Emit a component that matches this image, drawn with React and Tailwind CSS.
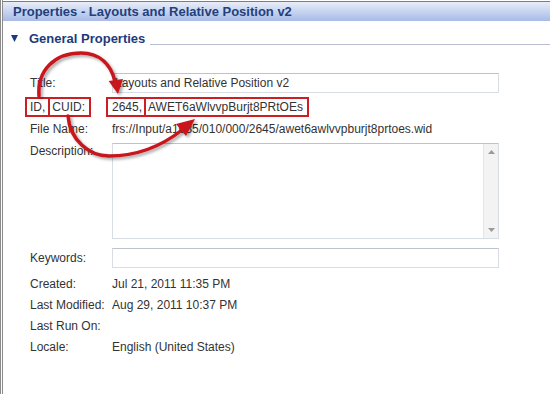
import React from "react";

const Label = ({ children, className = "" }) => (
  <div className={"w-[82px] shrink-0 text-[12px] text-[#333] " + className}>{children}</div>
);

const Input = ({ children }) => (
  <div className="w-[387px] h-[20px] border border-[#d8dce4] border-t-[#bfc3cb] flex items-center pl-[2px] text-[12px] text-[#333] bg-white">
    {children}
  </div>
);

function Arrows() {
  return (
    <svg className="absolute left-0 top-0 pointer-events-none" width="550" height="394" viewBox="0 0 550 394">
      <defs>
        <filter id="sh" x="-20%" y="-20%" width="140%" height="140%">
          <feDropShadow dx="2" dy="2" stdDeviation="1.5" floodColor="#000" floodOpacity="0.35" />
        </filter>
      </defs>
      <g filter="url(#sh)" fill="none" stroke="#c8161d" strokeWidth="3.5" strokeLinecap="round">
        <path d="M 36 96 C 34 70, 52 53, 78 53 C 98 53, 108 66, 112 81" />
        <path d="M 65 116 C 67 140, 86 156, 106 156 C 135 156, 160 145, 179 130" />
      </g>
      <g filter="url(#sh)" fill="#c8161d">
        <polygon points="105.6,81 120,79 115,94" />
        <polygon points="173,124 183,136 192,119" />
      </g>
    </svg>
  );
}

export default function App() {
  return (
    <div className="relative w-[550px] h-[394px] bg-white overflow-hidden font-['Liberation_Sans',Arial,sans-serif] border-l-[3px] border-double border-[#8a8a8a]">
      <div className="mt-[1px] h-[20px] border-t border-[#6d7ea6] bg-gradient-to-b from-[#e8edf8] to-[#a7bbe6] flex items-center pl-[10px]">
        <span className="text-[13px] font-bold text-[#22407c] leading-none">Properties - Layouts and Relative Position v2</span>
      </div>

      <div className="mt-[10px] h-[14px] flex items-center">
        <svg className="ml-[8px]" width="7" height="7" viewBox="0 0 7 7"><polygon points="0,0 7,0 3.5,7" fill="#1d3b7a" /></svg>
        <span className="ml-[11px] text-[13px] font-bold text-[#1d3b7a] leading-none">General Properties</span>
        <div className="ml-[5px] flex-1 h-[1px] bg-[#b7bed2] mt-[12px]"></div>
      </div>

      <div className="ml-[27px] mt-[28px] flex flex-col">
        <div className="h-[20px] flex items-center">
          <Label>Title:</Label>
          <Input>Layouts and Relative Position v2</Input>
        </div>

        <div className="mt-[4px] h-[20px] flex items-center">
          <Label>
            <div className="flex -ml-[5px]">
              <span className="border-2 border-[#cc1f24] h-[20px] flex items-center px-[3px]">ID,</span>
              <span className="-ml-[2px] border-2 border-[#cc1f24] h-[20px] flex items-center pl-[2px] pr-[4px]">CUID:</span>
            </div>
          </Label>
          <div className="flex -ml-[6px] text-[12px] text-[#333]">
            <span className="border-2 border-[#cc1f24] h-[20px] flex items-center pl-[4px] pr-[2px]">2645,</span>
            <span className="-ml-[2px] border-2 border-[#cc1f24] h-[20px] flex items-center pl-[2px] pr-[4px]">AWET6aWlvvpBurjt8PRtOEs</span>
          </div>
        </div>

        <div className="mt-[2px] h-[20px] flex items-center">
          <Label>File Name:</Label>
          <span className="text-[12px] text-[#333]">frs://Input/a1085/010/000/2645/awet6awlvvpburjt8prtoes.wid</span>
        </div>

        <div className="mt-[4px] flex items-start">
          <Label className="mt-[1px] leading-[14px]">Description:</Label>
          <div className="w-[387px] h-[96px] border border-[#d8dce4] border-t-[#bfc3cb] flex justify-end bg-white">
            <div className="w-[15px] h-full bg-[#f3f3f3] border-l border-[#e6e6e6] flex flex-col items-center justify-between py-[6px]">
              <svg width="7" height="4" viewBox="0 0 7 4"><polygon points="0,4 3.5,0 7,4" fill="#9a9a9a" /></svg>
              <svg width="7" height="4" viewBox="0 0 7 4"><polygon points="0,0 7,0 3.5,4" fill="#9a9a9a" /></svg>
            </div>
          </div>
        </div>

        <div className="mt-[9px] h-[20px] flex items-center">
          <Label>Keywords:</Label>
          <Input></Input>
        </div>

        <div className="mt-[5px] h-[21px] flex items-center">
          <Label>Created:</Label>
          <span className="text-[12px] text-[#333]">Jul 21, 2011 11:35 PM</span>
        </div>
        <div className="h-[21px] flex items-center">
          <Label>Last Modified:</Label>
          <span className="text-[12px] text-[#333]">Aug 29, 2011 10:37 PM</span>
        </div>
        <div className="h-[21px] flex items-center">
          <Label>Last Run On:</Label>
        </div>
        <div className="h-[21px] flex items-center">
          <Label>Locale:</Label>
          <span className="text-[12px] text-[#333]">English (United States)</span>
        </div>
      </div>

      <Arrows />
    </div>
  );
}
